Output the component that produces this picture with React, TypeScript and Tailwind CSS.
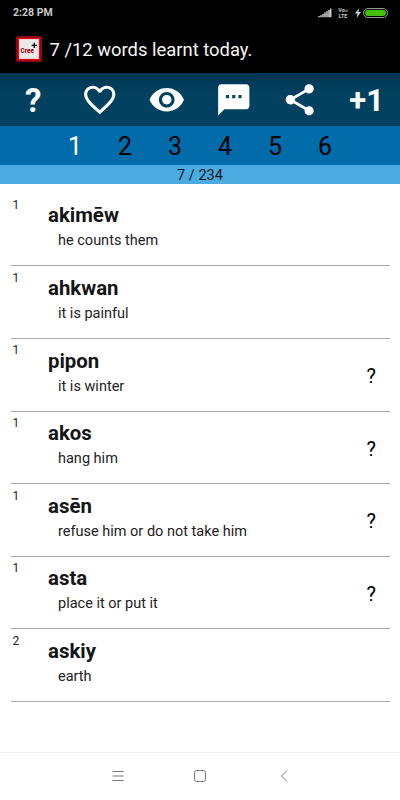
import React from "react";

type Word = { level: number; term: string; meaning: string; unknown?: boolean };

const words: Word[] = [
  { level: 1, term: "akimēw", meaning: "he counts them" },
  { level: 1, term: "ahkwan", meaning: "it is painful" },
  { level: 1, term: "pipon", meaning: "it is winter", unknown: true },
  { level: 1, term: "akos", meaning: "hang him", unknown: true },
  { level: 1, term: "asēn", meaning: "refuse him or do not take him", unknown: true },
  { level: 1, term: "asta", meaning: "place it or put it", unknown: true },
  { level: 2, term: "askiy", meaning: "earth" },
];

const icons = {
  heart:
    "M16.5 3c-1.74 0-3.41.81-4.5 2.09C10.91 3.81 9.24 3 7.5 3 4.42 3 2 5.42 2 8.5c0 3.78 3.4 6.86 8.55 11.54L12 21.35l1.45-1.32C18.6 15.36 22 12.28 22 8.5 22 5.42 19.58 3 16.5 3zm-4.4 15.55l-.1.1-.1-.1C7.14 14.24 4 11.39 4 8.5 4 6.5 5.5 5 7.5 5c1.54 0 3.04.99 3.57 2.36h1.87C13.46 5.99 14.96 5 16.5 5c2 0 3.5 1.5 3.5 3.5 0 2.89-3.14 5.74-7.9 10.05z",
  eye: "M12 4.5C7 4.5 2.73 7.61 1 12c1.73 4.39 6 7.5 11 7.5s9.27-3.11 11-7.5c-1.73-4.39-6-7.5-11-7.5zM12 17c-2.76 0-5-2.24-5-5s2.24-5 5-5 5 2.24 5 5-2.24 5-5 5zm0-8c-1.66 0-3 1.34-3 3s1.34 3 3 3 3-1.34 3-3-1.34-3-3-3z",
  message:
    "M20 2H4c-1.1 0-1.99.9-1.99 2L2 22l4-4h14c1.1 0 2-.9 2-2V4c0-1.1-.9-2-2-2zM9 11H7V9h2v2zm4 0h-2V9h2v2zm4 0h-2V9h2v2z",
  share:
    "M18 16.08c-.76 0-1.44.3-1.96.77L8.91 12.7c.05-.23.09-.46.09-.7s-.04-.47-.09-.7l7.05-4.11c.54.5 1.25.81 2.04.81 1.66 0 3-1.34 3-3s-1.34-3-3-3-3 1.34-3 3c0 .24.04.47.09.7L8.04 9.81C7.5 9.31 6.79 9 6 9c-1.66 0-3 1.34-3 3s1.34 3 3 3c.79 0 1.5-.31 2.04-.81l7.12 4.16c-.05.21-.08.43-.08.65 0 1.61 1.31 2.92 2.92 2.92 1.61 0 2.92-1.31 2.92-2.92s-1.31-2.92-2.92-2.92z",
};

function ToolIcon({ path }: { path: string }) {
  return (
    <svg viewBox="0 0 24 24" className="size-[37.5px] fill-white">
      <path d={path} />
    </svg>
  );
}

function StatusBar() {
  return (
    <div className="flex h-[25px] items-center pr-3 pl-[13px]">
      <span className="flex-1 pt-0.5 text-[10.5px] leading-none font-bold text-[#c8c8c8]">2:28 PM</span>
      <svg width="14" height="10" viewBox="0 0 14 10" className="mr-[5px]">
        <path
          d="M1 9.2V8M3 9.2V7.2M5 9.2V6M7 9.2V4.6M9 9.2V3.2M11 9.2V2M12.7 9.2V.6"
          stroke="#c8c8c8"
          strokeWidth="1.6"
        />
      </svg>
      <div className="mr-[6px] flex w-[12px] flex-col items-center text-[5.5px] leading-[6px] font-bold text-[#c8c8c8]">
        <span>Vo»</span>
        <span>LTE</span>
      </div>
      <svg width="6" height="10" viewBox="0 0 6 10" className="mr-[2px]">
        <path d="M4.2 0 0 5.5h2.5L1.5 10 6 4H3.4z" fill="#d0d0d0" />
      </svg>
      <div className="h-[10px] w-[25px] rounded-full border border-[#999] p-px">
        <div className="h-full rounded-full bg-[#45bf0b]" />
      </div>
    </div>
  );
}

function Logo() {
  return (
    <svg width="26" height="26" viewBox="0 0 26 26">
      <rect width="26" height="26" rx="1.5" fill="#8c0713" />
      <rect x="2.5" y="2.5" width="21" height="21" fill="#e8e8e8" stroke="#e30613" strokeWidth="1.2" />
      <path d="M18.3 6.7v5.4M15.7 9.4h5.3" stroke="#000" strokeWidth="1.4" />
      <text
        x="4.6"
        y="17.3"
        fontSize="7"
        fontWeight="900"
        fill="#b00010"
        textLength="13.2"
        lengthAdjust="spacingAndGlyphs"
      >
        Cree
      </text>
    </svg>
  );
}

export default function App() {
  return (
    <div className="flex h-[800px] w-[400px] flex-col overflow-hidden bg-white font-['Roboto',sans-serif]">
      <header className="h-[73px] shrink-0 bg-black">
        <StatusBar />
        <div className="flex h-12 items-center pl-4">
          <Logo />
          <h1 className="ml-[7.5px] pt-0.5 text-[18.4px] leading-none text-[#f5f5f5]">7 /12 words learnt today.</h1>
        </div>
      </header>

      <div className="grid h-[53px] shrink-0 grid-cols-6 place-items-center bg-linear-to-b from-[#003653] to-[#02415f] to-40% text-white">
        <span className="pt-0.5 text-[33px] leading-none font-bold">?</span>
        <ToolIcon path={icons.heart} />
        <ToolIcon path={icons.eye} />
        <ToolIcon path={icons.message} />
        <ToolIcon path={icons.share} />
        <span className="pt-0.5 text-[31px] leading-none font-bold">+1</span>
      </div>

      <nav className="flex h-[39px] shrink-0 items-center justify-center bg-[#026caa] pt-0.5 text-[25px] leading-none">
        {[1, 2, 3, 4, 5, 6].map((n) => (
          <span key={n} className={n === 1 ? "w-[50px] text-center text-white" : "w-[50px] text-center text-black"}>
            {n}
          </span>
        ))}
      </nav>

      <div className="flex h-[18.5px] shrink-0 items-center justify-center bg-[#4baadf] pt-[4px] text-[14.5px] leading-none text-[#101820]">
        7 / 234
      </div>

      <main className="flex-1 px-[10.5px] pt-[10.3px]">
        {words.map((w) => (
          <div key={w.term} className="flex h-[72.6px] border-b border-[#a8a8a8]">
            <span className="w-[37.5px] pt-[4.5px] pl-[2px] text-[12px] leading-[14px] text-[#222]">{w.level}</span>
            <div className="flex-1 pt-[9.7px]">
              <div className="text-[20.4px] leading-6 font-bold text-[#151515]">{w.term}</div>
              <div className="pt-[6px] pl-[10px] text-[14.5px] leading-4 text-[#222]">{w.meaning}</div>
            </div>
            {w.unknown && <span className="w-[23px] pt-[25px] text-[20px] leading-6 text-black">?</span>}
          </div>
        ))}
      </main>

      <footer className="flex h-12 shrink-0 items-center justify-center border-t border-[#f1f1f1] pb-[2px]">
        <svg width="180" height="14" viewBox="0 0 180 14" fill="none" stroke="#777" strokeWidth="1">
          <path d="M2.5 2.5h11M2.5 7h11M2.5 11.5h11" />
          <rect x="84.5" y="1.5" width="11" height="11" rx="2.5" />
          <path d="M177 1.5 171.5 7l5.5 5.5" />
        </svg>
      </footer>
    </div>
  );
}
